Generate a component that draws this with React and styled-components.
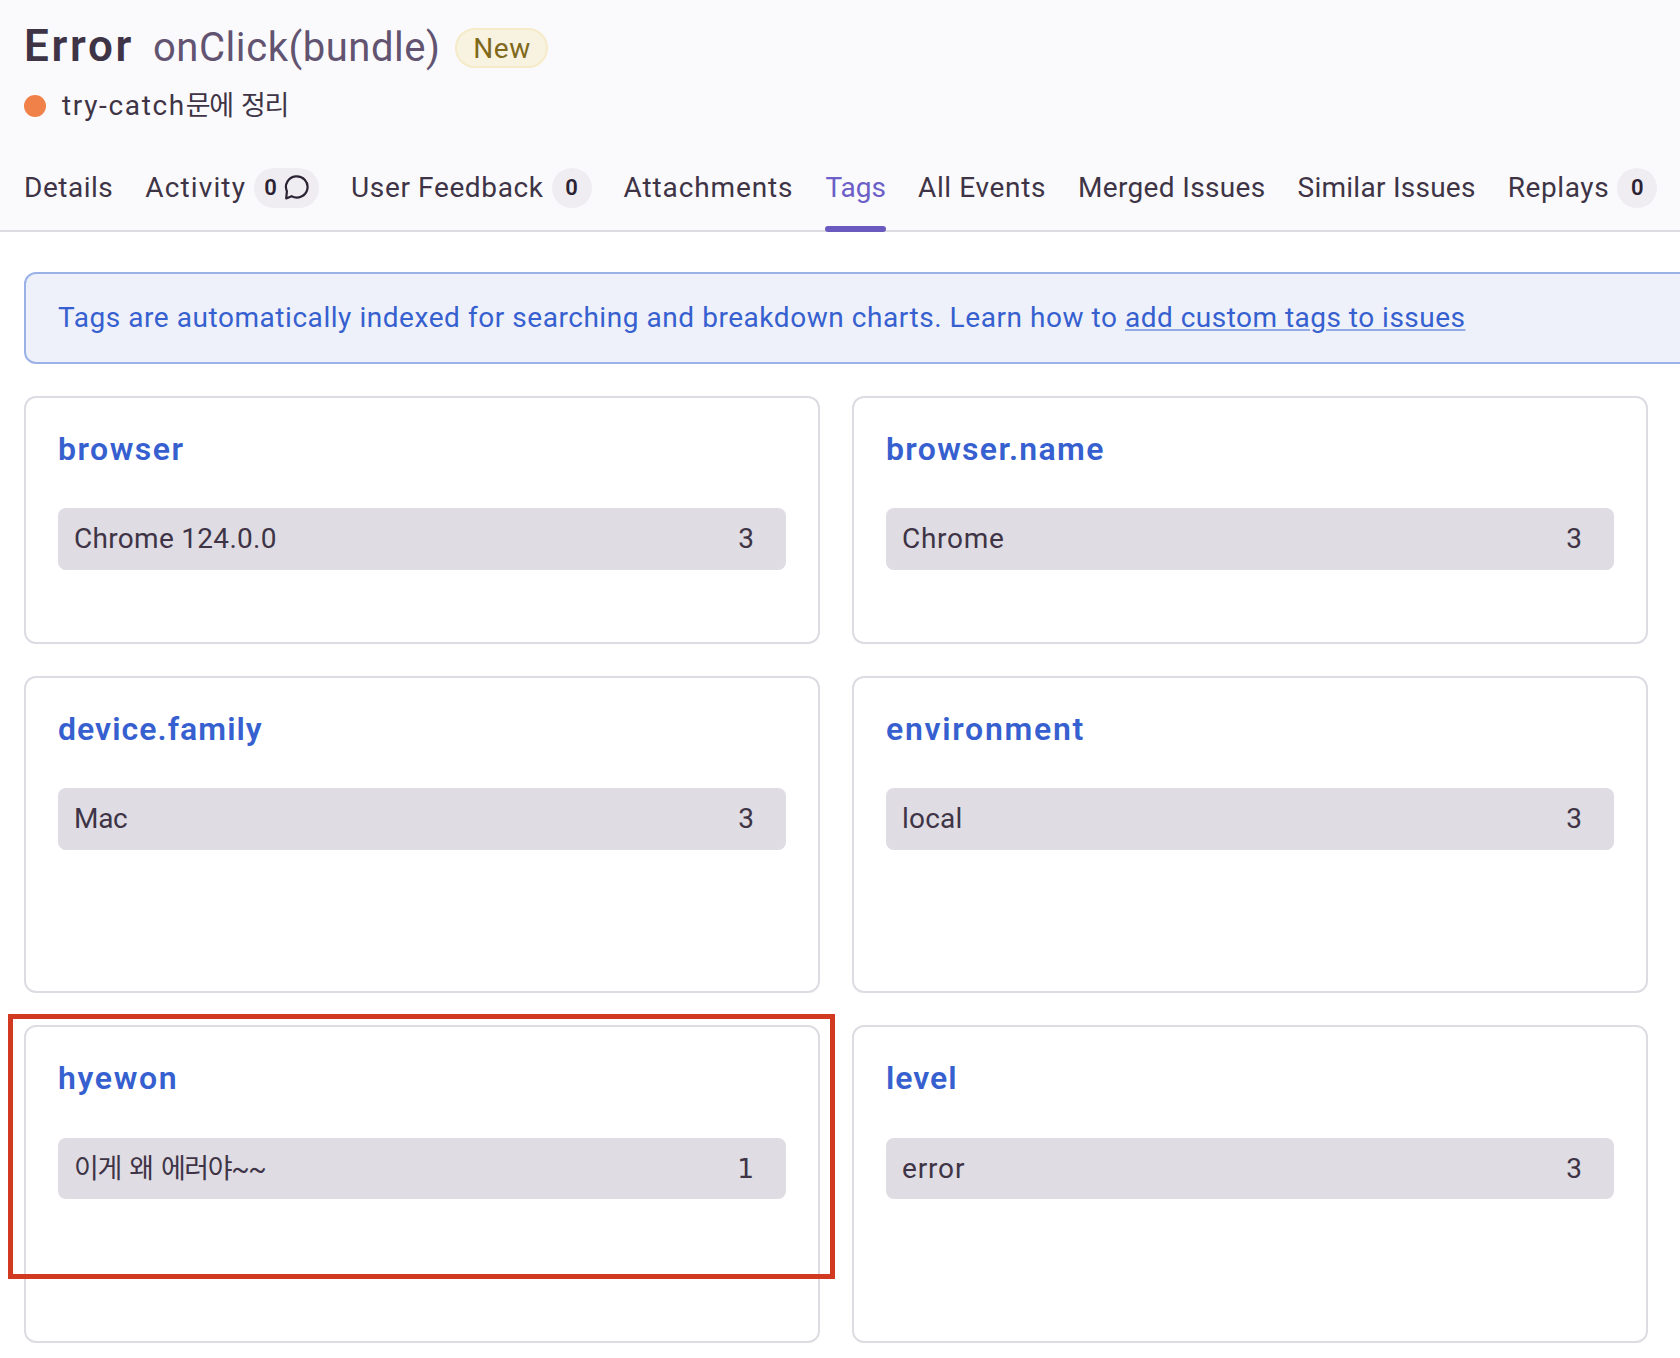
import React from 'react';
import styled, { createGlobalStyle } from 'styled-components';

const GlobalStyle = createGlobalStyle`
  * { box-sizing: border-box; }
  body {
    margin: 0;
    background: #ffffff;
    color: #3e3446;
    font-family: Roboto, "Noto Sans CJK KR", sans-serif;
    font-size: 28px;
    overflow: hidden;
  }
`;

const Page = styled.div`
  width: 1680px;
  height: 1358px;
  overflow: hidden;
`;

const Header = styled.header`
  display: flex;
  flex-direction: column;
  height: 232px;
  background: #fafafc;
  border-bottom: 2px solid #dedce3;
  padding: 24px 0 0 24px;
`;

const TitleRow = styled.div`
  display: flex;
  flex: none;
  align-items: center;
  height: 48px;
`;

const Label = styled.span`
  white-space: nowrap;
  line-height: 34px;
  letter-spacing: ${(p) => p.$track || 0}px;
`;

const KoreanLabel = styled(Label)`
  font-size: 27px;
  letter-spacing: -1.4px;
  word-spacing: 3px;
`;

const ErrorType = styled.span`
  width: 129px;
  padding-bottom: 3px;
  font-size: 44px;
  font-weight: 600;
  line-height: 45px;
  letter-spacing: 2.7px;
  white-space: nowrap;
`;

const Culprit = styled.span`
  width: 302px;
  color: #625471;
  font-size: 40px;
  line-height: 48px;
  letter-spacing: 0.55px;
  white-space: nowrap;
`;

const NewTag = styled.span`
  display: flex;
  align-items: center;
  justify-content: center;
  width: 93px;
  height: 40px;
  border: 2px solid #f5ebc8;
  border-radius: 20px;
  padding-left: 1px;
  background: #f8f2e1;
  color: #80691b;
  letter-spacing: 0.6px;
`;

const MessageRow = styled.div`
  display: flex;
  flex: none;
  align-items: center;
  gap: 16px;
  height: 40px;
  margin-top: 14px;
`;

const Message = styled.div`
  display: flex;
  height: 34px;
`;

const LevelDot = styled.span`
  width: 22px;
  height: 22px;
  border-radius: 50%;
  background: #f08148;
`;

const Tabs = styled.nav`
  display: flex;
  flex: none;
  gap: 32px;
  height: 64px;
  margin-top: 42px;
  margin-bottom: -2px;
`;

const TabItem = styled.div`
  display: flex;
  flex: none;
  flex-direction: column;
  justify-content: space-between;
  height: 64px;
  color: ${(p) => (p.$active ? '#6c5fc7' : '#3e3446')};
`;

const TabBody = styled.div`
  display: flex;
  align-items: center;
  gap: 8px;
  height: 40px;
`;

const TabMarker = styled.span`
  height: 6px;
  border-radius: 3px;
  background: #6a5ac0;
`;

const Badge = styled.span`
  display: flex;
  align-items: center;
  justify-content: center;
  gap: 7px;
  width: ${(p) => (p.$wide ? 65 : 40)}px;
  height: 40px;
  border-radius: 20px;
  padding-bottom: 1px;
  background: #efedf2;
  color: #2b2233;
  font-size: 22px;
  font-weight: 600;
`;

const ChatIcon = () => (
  <svg width="25" height="25" viewBox="0 0 25 25" fill="none" stroke="#2b2233" strokeWidth="2.2" strokeLinejoin="round" strokeLinecap="round">
    <path d="M2.2 23.4 L2.9 16.2 A10.8 10.6 0 1 1 7.6 21.2 Z" />
  </svg>
);

const Content = styled.main`
  display: flex;
  flex-direction: column;
  gap: 32px;
  padding: 40px 0 0 24px;
`;

const Notice = styled.div`
  display: flex;
  align-items: center;
  width: 1700px;
  height: 92px;
  border: 2px solid #9bb2e8;
  border-radius: 12px;
  background: #eef1fa;
  padding: 0 32px;
  color: #3660cf;
`;

const NoticeLink = styled.a`
  letter-spacing: 0.48px;
  text-decoration: underline;
  text-decoration-color: #93abe5;
  text-decoration-thickness: 2px;
  text-underline-offset: 2px;
`;

const Grid = styled.div`
  display: grid;
  grid-template-columns: 796px 796px;
  grid-template-rows: 248px 317px 318px;
  gap: 32px;
`;

const Card = styled.section`
  position: relative;
  border: 2px solid #dedce3;
  border-radius: 12px;
  padding: 32px;
`;

const TagName = styled.h2`
  margin: 0 0 ${(p) => (p.$last ? 41 : 40)}px;
  font-size: 32px;
  line-height: 38px;
  font-weight: 600;
  letter-spacing: ${(p) => p.$track}px;
  color: #3660cf;
`;

const TagBar = styled.div`
  display: flex;
  align-items: center;
  justify-content: space-between;
  height: ${(p) => (p.$last ? 61 : 62)}px;
  border-radius: 8px;
  background: #dfdce3;
  padding: 0 32px 0 16px;
`;

const Count = styled(Label)`
  ${(p) => p.$footed && 'font-family: "DejaVu Sans", sans-serif; font-size: 26.5px;'}
`;

const Highlight = styled.div`
  position: absolute;
  left: -18px;
  top: -13px;
  width: 827px;
  height: 265px;
  border: 5px solid #d13920;
`;

const tabs = [
  { label: 'Details', track: 0.52 },
  { label: 'Activity', track: 1.13, count: 0, chat: true },
  { label: 'User Feedback', track: 0.63, count: 0 },
  { label: 'Attachments', track: 0.88 },
  { label: 'Tags', track: 0 },
  { label: 'All Events', track: 0.63 },
  { label: 'Merged Issues', track: 0.34 },
  { label: 'Similar Issues', track: 0.26 },
  { label: 'Replays', track: 0.6, count: 0 },
];

const activeTab = 'Tags';

const tags = [
  { name: 'browser', nameTrack: 1.5, value: 'Chrome 124.0.0', valueTrack: 0.3, count: 3 },
  { name: 'browser.name', nameTrack: 1.32, value: 'Chrome', valueTrack: 0.7, count: 3 },
  { name: 'device.family', nameTrack: 1.04, value: 'Mac', valueTrack: -0.3, count: 3 },
  { name: 'environment', nameTrack: 1.72, value: 'local', valueTrack: 0.2, count: 3 },
  { name: 'hyewon', nameTrack: 1.65, value: '이게 왜 에러야~~', korean: true, count: 1, highlight: true, last: true },
  { name: 'level', nameTrack: 0.95, value: 'error', valueTrack: 0.85, count: 3, last: true },
];

export default function App() {
  return (
    <Page>
      <GlobalStyle />
      <Header>
        <TitleRow>
          <ErrorType>Error</ErrorType>
          <Culprit>onClick(bundle)</Culprit>
          <NewTag>New</NewTag>
        </TitleRow>
        <MessageRow>
          <LevelDot />
          <Message>
            <Label $track={1.65}>try-catch</Label>
            <KoreanLabel>문에 정리</KoreanLabel>
          </Message>
        </MessageRow>
        <Tabs>
          {tabs.map((t) => (
            <TabItem key={t.label} $active={t.label === activeTab}>
              <TabBody>
                <Label $track={t.track}>{t.label}</Label>
                {t.count !== undefined && (
                  <Badge $wide={t.chat}>
                    {t.count}
                    {t.chat && <ChatIcon />}
                  </Badge>
                )}
              </TabBody>
              {t.label === activeTab && <TabMarker />}
            </TabItem>
          ))}
        </Tabs>
      </Header>
      <Content>
        <Notice>
          <Label $track={0.55}>
            Tags are automatically indexed for searching and breakdown charts. Learn how to{' '}
            <NoticeLink>add custom tags to issues</NoticeLink>
          </Label>
        </Notice>
        <Grid>
          {tags.map((t) => (
            <Card key={t.name}>
              <TagName $track={t.nameTrack} $last={t.last}>{t.name}</TagName>
              <TagBar $last={t.last}>
                {t.korean ? <KoreanLabel>{t.value}</KoreanLabel> : <Label $track={t.valueTrack}>{t.value}</Label>}
                <Count $footed={t.count === 1}>{t.count}</Count>
              </TagBar>
              {t.highlight && <Highlight />}
            </Card>
          ))}
        </Grid>
      </Content>
    </Page>
  );
}
